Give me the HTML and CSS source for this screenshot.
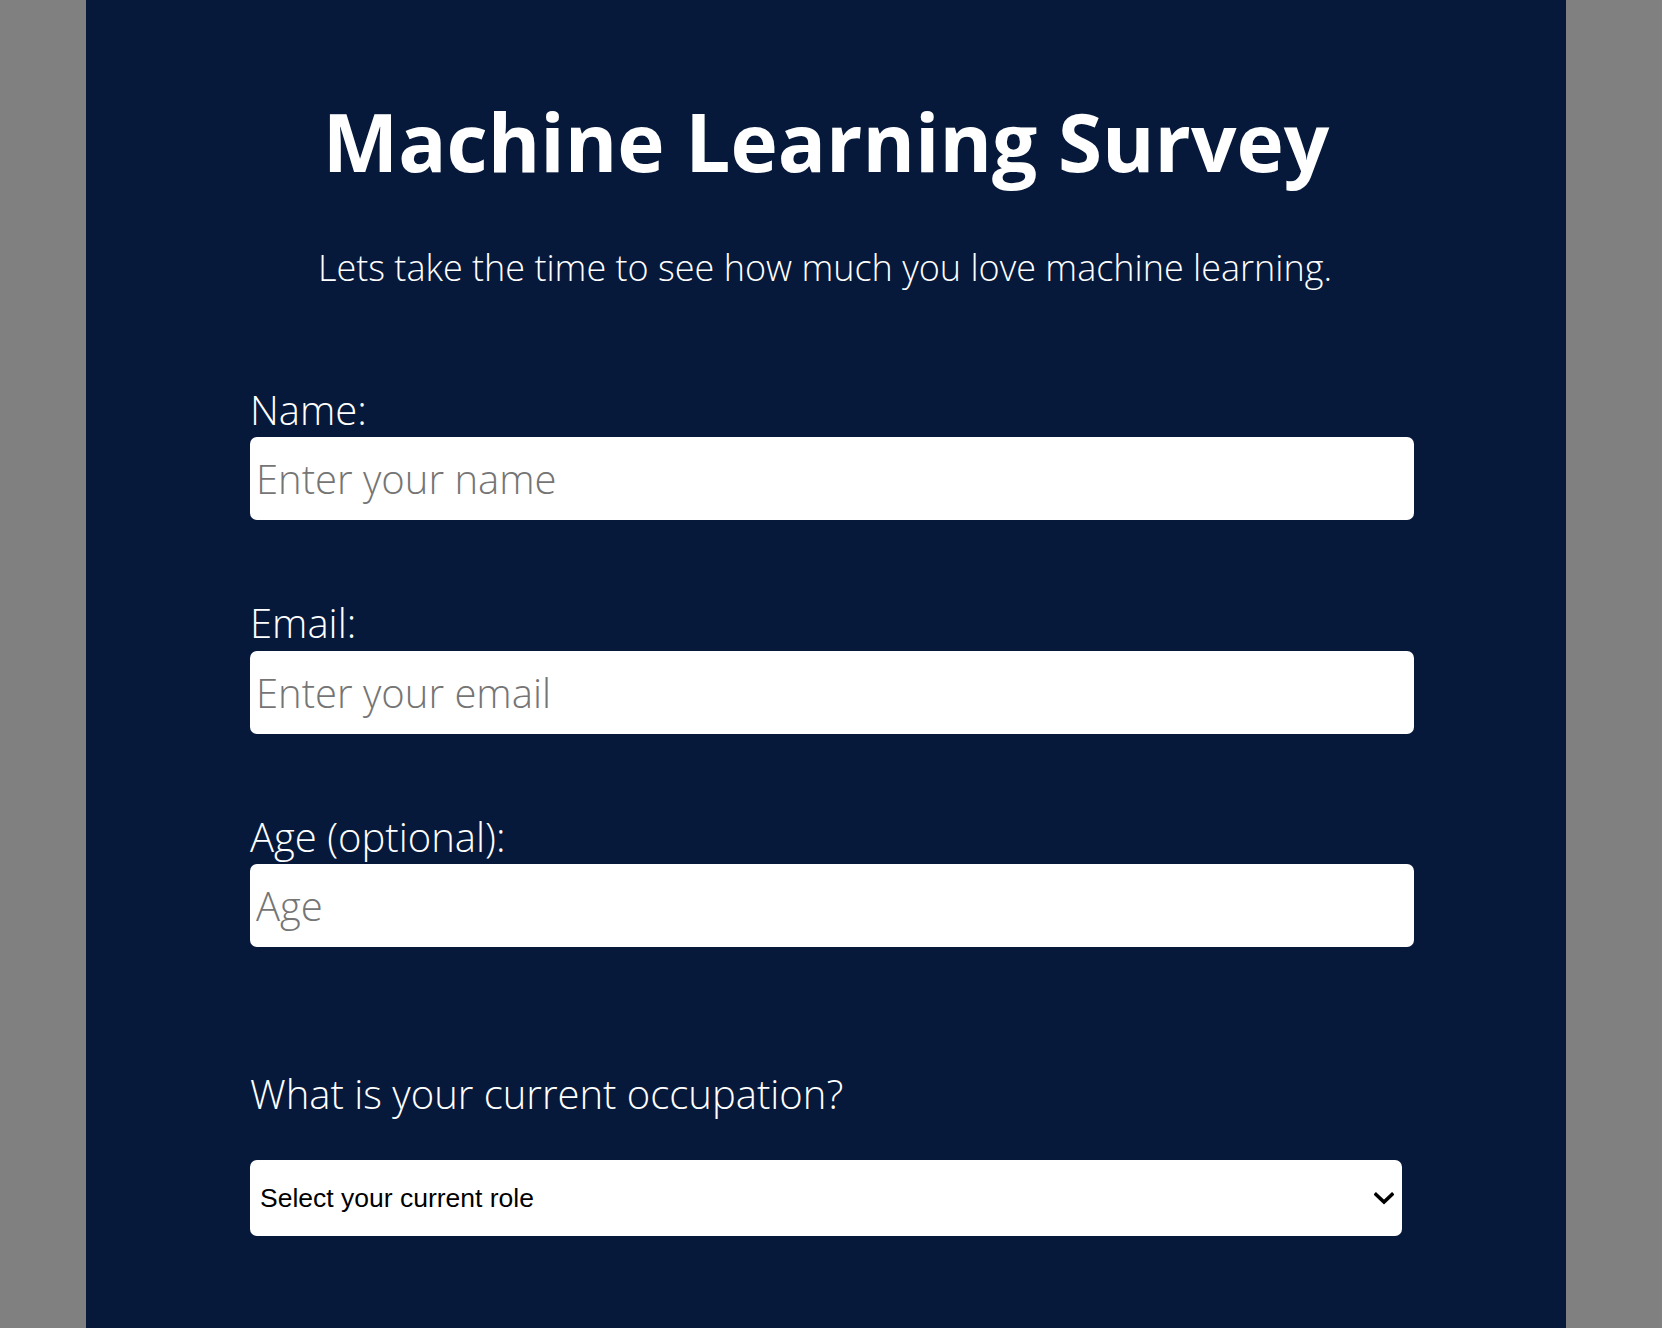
FILE: index.html
```html
<!DOCTYPE html>
<html lang="en">
<head>
<meta charset="utf-8">
<title>Machine Learning Survey</title>
<link rel="stylesheet" href="styles.css">
</head>
<body>
<main class="container">
  <h1 class="title">Machine Learning Survey</h1>
  <p class="description">Lets take the time to see how much you love machine learning.</p>
  <form class="survey-form">
    <div class="field">
      <label class="field-label" for="name">Name:</label>
      <input class="text-input" id="name" type="text" placeholder="Enter your name">
    </div>
    <div class="field">
      <label class="field-label" for="email">Email:</label>
      <input class="text-input" id="email" type="email" placeholder="Enter your email">
    </div>
    <div class="field">
      <label class="field-label" for="age">Age (optional):</label>
      <input class="text-input" id="age" type="number" placeholder="Age">
    </div>
    <div class="field field-select">
      <label class="question-label" for="role">What is your current occupation?</label>
      <div class="select-wrap">
        <select class="select-input" id="role">
          <option>Select your current role</option>
          <option>Student</option>
          <option>Full time job</option>
          <option>Full time learner</option>
          <option>Prefer not to say</option>
          <option>Other</option>
        </select>
        <svg class="chevron" width="20" height="13" viewBox="0 0 20 13" aria-hidden="true"><path d="M2 2.5 L10 10 L18 2.5" fill="none" stroke="#000" stroke-width="3.6" stroke-linecap="square" stroke-linejoin="miter"/></svg>
      </div>
    </div>
  </form>
</main>
</body>
</html>
```
FILE: styles.css
```css
html, body {
  margin: 0;
  padding: 0;
}

body {
  background: #808080;
  font-family: "Open Sans", "Liberation Sans", sans-serif;
  color: #ffffff;
}

.container {
  margin: 0 96px 0 86px;
  min-height: 1328px;
  background: #07193b;
  padding: 0 152px 0 164px;
  box-sizing: border-box;
}

.title {
  margin: 0 -152px 0 -164px;
  padding-top: 86px;
  font-size: 80px;
  font-weight: 700;
  line-height: 109px;
  text-align: center;
}

.description {
  margin: 48px -151px 0 -165px;
  font-size: 36px;
  font-weight: 300;
  line-height: 49px;
  text-align: center;
}

.survey-form {
  margin-top: 90.5px;
}

.field {
  display: flex;
  flex-direction: column;
  align-items: flex-start;
  margin-bottom: 76px;
}

.field-label {
  font-size: 40px;
  font-weight: 300;
  line-height: 54.5px;
}

.text-input {
  width: 100%;
  height: 83px;
  box-sizing: border-box;
  border: 0;
  border-radius: 7px;
  background: #ffffff;
  padding: 0 6px;
  font-family: "Open Sans", sans-serif;
  font-weight: 300;
  font-size: 40px;
  color: #222;
  outline: none;
  -moz-appearance: textfield;
}

.text-input::placeholder {
  color: #757575;
}

.text-input::-webkit-outer-spin-button,
.text-input::-webkit-inner-spin-button {
  -webkit-appearance: none;
  margin: 0;
}

.field-select {
  margin-top: 120px;
}

.question-label {
  font-size: 40px;
  font-weight: 300;
  line-height: 54.5px;
  margin-bottom: 38.5px;
}

.select-wrap {
  position: relative;
  width: 1152px;
}

.select-input {
  -webkit-appearance: none;
  appearance: none;
  width: 100%;
  height: 76px;
  border: 0;
  border-radius: 7px;
  background: #ffffff;
  padding: 0 40px 0 10px;
  font-family: "Liberation Sans", Arial, sans-serif;
  font-size: 26.5px;
  color: #000;
  outline: none;
}

.chevron {
  position: absolute;
  right: 8px;
  top: 32px;
  pointer-events: none;
}
```
